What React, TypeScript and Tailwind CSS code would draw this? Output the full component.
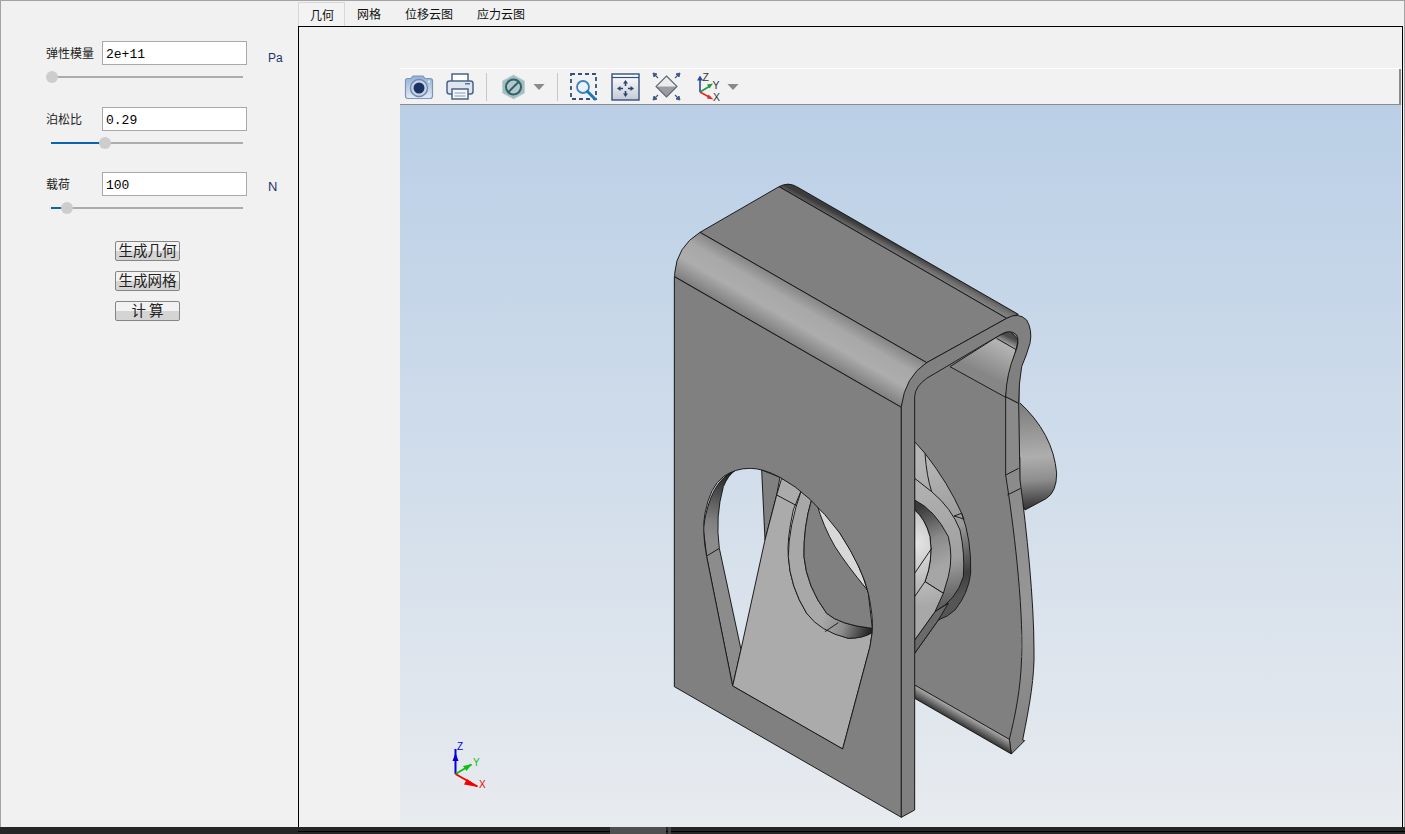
import React from 'react';

const cjk = { fontFamily: '"Noto Sans CJK SC", "Liberation Sans", sans-serif' };

const Z3 = 'translate(660 170) scale(0.33333)';
const Z4 = 'translate(660 450) scale(0.33333)';
const Z6 = 'translate(880 430) scale(0.33333)';
const EDGE = { stroke: '#1c1c1c', strokeWidth: 3, strokeLinejoin: 'round' as const };

const Field: React.FC<{ label: string; value: string; unit?: string; unitClass?: string }> = ({ label, value, unit, unitClass }) => (
  <div className="flex h-6 items-center">
    <span className="w-14 text-xs text-[#222]" style={cjk}>{label}</span>
    <input
      readOnly
      value={value}
      className="h-6 w-[145px] border border-[#a9a9a9] bg-white px-[3px] pt-0.5 font-['Liberation_Mono'] text-[13px] text-black outline-none"
    />
    {unit && <span className={unitClass}>{unit}</span>}
  </div>
);

const Slider: React.FC<{ fill: string; thumb: string }> = ({ fill, thumb }) => (
  <div className="relative ml-[5px] mt-2.5 flex h-1 w-[192px] items-center bg-transparent">
    <div className="h-0.5 w-full bg-[#acacac]" />
    <div className={`absolute left-0 top-[1px] h-0.5 bg-[#0a64b4] ${fill}`} />
    <div className={`absolute -top-[4px] h-3 w-3 rounded-full bg-[#cdcdcd] ${thumb}`} />
  </div>
);

const Btn: React.FC<{ children: React.ReactNode }> = ({ children }) => (
  <button
    className="flex h-5 w-[65px] items-center justify-center rounded-[2px] border border-[#858585] bg-linear-to-b from-[#f2f2f2] from-50% to-[#d4d4d4] to-50% pb-0.5 text-[14.5px] leading-none text-[#222]"
    style={cjk}
  >
    {children}
  </button>
);

const Tab: React.FC<{ children: React.ReactNode; active?: boolean }> = ({ children, active }) => (
  <div
    className={`flex h-6 items-center text-xs text-[#111] ${active ? 'w-[47px] border border-b-0 border-[#d8d8d8] bg-[#f3f3f3] pl-[11px]' : 'px-3'}`}
    style={cjk}
  >
    {children}
  </div>
);

const ToolbarIcons: React.FC = () => (
  <div className="flex h-[35px] items-center border-r-2 border-[#8c8c8c] pl-[4px]">
    {/* camera */}
    <svg width="30" height="26" viewBox="0 0 30 26">
      <defs>
        <linearGradient id="cam" x1="0" y1="0" x2="0" y2="1">
          <stop offset="0" stopColor="#8fb1d9" />
          <stop offset="1" stopColor="#e2ebf5" />
        </linearGradient>
      </defs>
      <path d="M1.5 6.5 Q1.5 4.5 4 4.5 H7 L9 2 H19 L21 4.5 H26 Q28.5 4.5 28.5 6.5 V22 Q28.5 24.5 26 24.5 H4 Q1.5 24.5 1.5 22 Z" fill="url(#cam)" stroke="#7f94b6" strokeWidth="1.2" />
      <circle cx="15" cy="14" r="8.5" fill="#c9d5e6" stroke="#7287ab" strokeWidth="1.4" />
      <circle cx="15" cy="14" r="5.5" fill="#1b3264" />
      <circle cx="25" cy="7.5" r="0.9" fill="#fff" />
    </svg>
    {/* printer */}
    <svg className="ml-3" width="28" height="27" viewBox="0 0 28 27">
      <rect x="6" y="1" width="16" height="9" fill="#fff" stroke="#4b6487" strokeWidth="1.5" />
      <rect x="1" y="8" width="26" height="13" rx="2.5" fill="#dfe6ef" stroke="#4b6487" strokeWidth="1.5" />
      <rect x="19" y="10" width="5" height="1.5" fill="#5d7394" />
      <rect x="6" y="16" width="16" height="10" fill="#f5f7fa" stroke="#4b6487" strokeWidth="1.5" />
      <path d="M8.5 20 H19.5 M8.5 23 H19.5" stroke="#8a9ab0" strokeWidth="1.2" />
    </svg>
    <div className="ml-3 h-7 w-px bg-[#c8c8c8]" />
    {/* nut */}
    <svg className="ml-3.5" width="25" height="26" viewBox="0 0 25 26">
      <path d="M12.5 1 L23.5 7 V19 L12.5 25 L1.5 19 V7 Z" fill="#a3bcc0" stroke="#c2d2d4" strokeWidth="1" />
      <circle cx="12.5" cy="13" r="7.5" fill="#b4c8cb" stroke="#2f6269" strokeWidth="2" />
      <path d="M7.5 18 L17.5 8" stroke="#2f6269" strokeWidth="2" />
    </svg>
    <svg className="ml-[7px]" width="12" height="6" viewBox="0 0 13 7"><path d="M0 0 H13 L6.5 7 Z" fill="#8a8a8a" /></svg>
    <div className="ml-[12px] h-7 w-px bg-[#c8c8c8]" />
    {/* zoom window */}
    <svg className="ml-3" width="28" height="28" viewBox="0 0 28 28">
      <rect x="1" y="1" width="25" height="25" fill="none" stroke="#34507c" strokeWidth="1.8" strokeDasharray="4 3" />
      <circle cx="13" cy="14" r="6" fill="#eaf1f8" stroke="#3a86bd" strokeWidth="1.8" />
      <path d="M17.5 18.5 L25 26" stroke="#1c78bb" strokeWidth="3" strokeLinecap="round" />
    </svg>
    {/* fit */}
    <svg className="ml-[13px]" width="29" height="28" viewBox="0 0 29 28">
      <defs>
        <linearGradient id="fit" x1="0" y1="0" x2="0" y2="1">
          <stop offset="0" stopColor="#ffffff" />
          <stop offset="1" stopColor="#c4cad6" />
        </linearGradient>
      </defs>
      <rect x="1" y="1" width="27" height="26" fill="url(#fit)" stroke="#34507c" strokeWidth="1.4" />
      <path d="M1 4.5 H28" stroke="#34507c" strokeWidth="1.2" />
      <path d="M14.5 10 V13 M14.5 18 V21 M9 15.5 H12 M17 15.5 H20" stroke="#2b456e" strokeWidth="1.6" />
      <path d="M14.5 7 L12 10.5 H17 Z M14.5 24 L12 20.5 H17 Z M6 15.5 L9.5 13 V18 Z M23 15.5 L19.5 13 V18 Z" fill="#2b456e" />
    </svg>
    {/* zoom to fit diamond */}
    <svg className="ml-[12px]" width="29" height="29" viewBox="0 0 29 29">
      <path d="M14.5 4 L25 14.5 H4 Z" fill="#ececec" />
      <path d="M4 14.5 H25 L14.5 25 Z" fill="#9a9ba3" />
      <path d="M14.5 4 L25 14.5 L14.5 25 L4 14.5 Z" fill="none" stroke="#5f6672" strokeWidth="1.1" />
      <path d="M1 1 L5 2 L2 5 Z M28 1 L24 2 L27 5 Z M1 28 L5 27 L2 24 Z M28 28 L24 27 L27 24 Z" fill="#3f5a82" stroke="#3f5a82" />
      <path d="M2 2 L6 6 M27 2 L23 6 M2 27 L6 23 M27 27 L23 23" stroke="#3f5a82" strokeWidth="1.2" />
    </svg>
    {/* axes */}
    <svg className="ml-[13px]" width="27" height="29" viewBox="0 0 27 29">
      <path d="M6 20 V7" stroke="#2747a8" strokeWidth="1.6" />
      <path d="M6 3.5 L3 8.5 H9 Z" fill="#2747a8" />
      <path d="M6 20 L16 14" stroke="#1f9a45" strokeWidth="1.6" />
      <path d="M19 11.5 L13 12.5 L15.5 16.5 Z" fill="#1f9a45" />
      <path d="M6 20 L16 25.5" stroke="#e02a2a" strokeWidth="1.6" />
      <path d="M19.5 27.5 L14.5 22.5 L13 26.5 Z" fill="#e02a2a" />
      <text x="8.5" y="8.5" fontSize="10.5" fontFamily="Liberation Sans" fill="#333">Z</text>
      <text x="18.5" y="17" fontSize="10.5" fontFamily="Liberation Sans" fill="#333">Y</text>
      <text x="19" y="28.5" fontSize="10.5" fontFamily="Liberation Sans" fill="#333">X</text>
    </svg>
    <svg className="ml-[6px]" width="12" height="6" viewBox="0 0 13 7"><path d="M0 0 H13 L6.5 7 Z" fill="#8a8a8a" /></svg>
  </div>
);

// the clip nut, traced in page coordinates; groups use the 3x crop coordinates
const Model: React.FC = () => (
  <svg className="block h-full w-full" viewBox="400 105 1001 722" shapeRendering="crispEdges">
    <defs>
      <linearGradient id="dome" gradientUnits="userSpaceOnUse" x1="1110" y1="700" x2="1130" y2="1020">
        <stop offset="0" stopColor="#7c7c7c" />
        <stop offset="0.5" stopColor="#aeaeae" />
        <stop offset="0.72" stopColor="#8e8e8e" />
        <stop offset="1" stopColor="#2f2f2f" />
      </linearGradient>
      <linearGradient id="under" gradientUnits="userSpaceOnUse" x1="905" y1="790" x2="885" y2="825">
        <stop offset="0" stopColor="#a2a2a2" />
        <stop offset="1" stopColor="#161616" />
      </linearGradient>
      <linearGradient id="innerBend" gradientUnits="userSpaceOnUse" x1="1045" y1="500" x2="985" y2="620">
        <stop offset="0" stopColor="#4c4c4c" />
        <stop offset="0.2" stopColor="#b4b4b4" />
        <stop offset="1" stopColor="#868686" />
      </linearGradient>
      <linearGradient id="strip" gradientUnits="userSpaceOnUse" x1="0" y1="900" x2="0" y2="1750">
        <stop offset="0" stopColor="#8a8a8a" />
        <stop offset="0.5" stopColor="#979797" />
        <stop offset="1" stopColor="#808080" />
      </linearGradient>
      <linearGradient id="cutOuter" gradientUnits="userSpaceOnUse" x1="150" y1="100" x2="265" y2="490">
        <stop offset="0" stopColor="#b4b4b4" />
        <stop offset="0.5" stopColor="#9a9a9a" />
        <stop offset="0.85" stopColor="#3e3e3e" />
        <stop offset="1" stopColor="#555555" />
      </linearGradient>
      <linearGradient id="cutBand" gradientUnits="userSpaceOnUse" x1="140" y1="170" x2="235" y2="510">
        <stop offset="0" stopColor="#b0b0b0" />
        <stop offset="0.65" stopColor="#a0a0a0" />
        <stop offset="1" stopColor="#606060" />
      </linearGradient>
      <linearGradient id="cutDark" gradientUnits="userSpaceOnUse" x1="125" y1="230" x2="205" y2="400">
        <stop offset="0" stopColor="#3a3a3a" />
        <stop offset="0.55" stopColor="#8a8a8a" />
        <stop offset="1" stopColor="#a6a6a6" />
      </linearGradient>
      <radialGradient id="cutLight" gradientUnits="userSpaceOnUse" cx="105" cy="340" r="190">
        <stop offset="0" stopColor="#e6e6e6" />
        <stop offset="0.6" stopColor="#bdbdbd" />
        <stop offset="1" stopColor="#a8a8a8" />
      </radialGradient>
      <linearGradient id="topRim" gradientUnits="userSpaceOnUse" x1="712" y1="226" x2="696" y2="256">
        <stop offset="0" stopColor="#3c3c3c" />
        <stop offset="0.55" stopColor="#6e6e6e" />
        <stop offset="1" stopColor="#828282" />
      </linearGradient>
      <linearGradient id="bend" gradientUnits="userSpaceOnUse" x1="460" y1="383" x2="384" y2="514">
        <stop offset="0" stopColor="#868686" />
        <stop offset="0.28" stopColor="#a8a8a8" />
        <stop offset="0.62" stopColor="#adadad" />
        <stop offset="1" stopColor="#808080" />
      </linearGradient>
      <linearGradient id="rimLeft" gradientUnits="userSpaceOnUse" x1="205" y1="70" x2="150" y2="265">
        <stop offset="0" stopColor="#222222" />
        <stop offset="0.35" stopColor="#505050" />
        <stop offset="0.75" stopColor="#808080" />
        <stop offset="1" stopColor="#8c8c8c" />
      </linearGradient>
      <linearGradient id="dent" gradientUnits="userSpaceOnUse" x1="490" y1="500" x2="630" y2="552">
        <stop offset="0" stopColor="#a8a8a8" />
        <stop offset="0.45" stopColor="#8c8c8c" />
        <stop offset="1" stopColor="#222222" />
      </linearGradient>
    </defs>

    {/* behind: dome, back plate */}
    <g transform={Z3} {...EDGE}>
      <path d="M1076,695 Q1180,790 1190,910 Q1190,965 1160,985 L1095,1020 L1040,900 Z" fill="url(#dome)" />
      <path d="M764,620 L1080,480 L1085,1700 L1048,1708 L764,1545 Z" fill="#808080" stroke="none" />
      <path d="M870,590 L1020,495 L1050,483 L1075,510 L1065,550 L1045,620 L1037,682 Z" fill="url(#innerBend)" />
      <path d="M1010,505 L1070,540" fill="none" />
      <path d="M1037,680 L1037,915 C1060,1060 1090,1300 1085,1460 C1082,1560 1065,1640 1048,1708 L1054,1752 L1094,1712 L1088,1710 C1110,1600 1124,1520 1122,1440 C1122,1290 1100,1080 1080,930 L1076,700 Z" fill="url(#strip)" />
      <path d="M1037,915 L1076,895 M1042,975 L1082,955" fill="none" />
    </g>
    <g transform={Z4} {...EDGE}>
      <path d="M764,705 L1048,868 L1054,912 L764,745 Z" fill="url(#under)" />
    </g>

    {/* cutout seen past the front plate */}
    <g transform={Z6} {...EDGE}>
      <path d="M104,35 L135,70 Q205,160 245,250 Q275,330 272,430 Q265,490 225,540 Q205,560 175,570 L104,670 Z" fill="url(#cutOuter)" />
      <path d="M135,70 Q140,140 155,185 M222,258 L245,250 L252,268 Q238,262 222,258" fill="none" />
      <path d="M104,145 L155,185 Q215,235 240,300 Q255,370 250,440 Q230,510 165,545 L104,630 Z" fill="url(#cutBand)" />
      <path d="M104,630 L165,545 L205,520 L175,570 L104,670 Z" fill="#6a6a6a" />
      <path d="M104,210 Q165,240 205,320 Q220,380 205,440 L190,490 L135,455 Q160,390 150,320 Q135,265 104,240 Z" fill="url(#cutDark)" />
      <path d="M104,240 Q135,265 150,320 Q160,390 135,455 L190,490 L165,545 L104,630 Z" fill="url(#cutLight)" />
      <path d="M104,430 L155,355 M104,500 L135,455" fill="none" />
    </g>

    {/* pieces seen through the big hole */}
    <g transform={Z4} {...EDGE}>
      <path d="M225,62 Q150,90 130,235 L140,320 L218,708 L243,598 L178,295 Q165,200 190,110 Q205,75 225,62 Z" fill="url(#rimLeft)" />
      <path d="M140,318 L178,295" fill="none" />
      <path d="M305,60 L360,82 L350,135 L315,270 Z" fill="#808080" />
      <path d="M218,708 L243,598 L315,270 L350,135 L365,85 L425,118 L400,180 Q380,270 385,320 Q390,410 440,490 Q480,540 565,565 Q610,565 637,545 L630,590 L548,897 Z" fill="#ababab" />
      <path d="M350,135 L410,167" fill="none" />
      <path d="M425,118 L455,148 Q430,230 432,320 Q440,410 500,490 Q540,525 637,535 L637,548 Q610,565 565,565 Q480,545 440,490 Q390,410 385,320 Q385,230 425,118 Z" fill="url(#dent)" />
      <path d="M495,545 L535,518" fill="none" />
      <path d="M455,148 Q430,230 432,320 Q440,410 500,490 Q540,525 637,535 L625,430 Q610,360 540,250 Q480,170 455,148 Z" fill="#808080" />
      <path d="M470,160 Q490,230 525,290 Q560,345 622,420 Q600,340 540,250 Q500,190 470,160 Z" fill="#d8d8d8" />
    </g>

    {/* front shell */}
    <g transform={Z3} {...EDGE}>
      <path d="M357,50 Q385,35 410,50 L1075,433 L1040,445 Z" fill="url(#topRim)" />
      <path d="M120,187 L357,50 L1040,445 L800,578 Z" fill="#808080" />
      <path d="M120,187 L800,578 Q740,620 724,712 L44,320 L44,310 Q50,230 120,187 Z" fill="url(#bend)" />
    </g>
    <g transform={Z4} {...EDGE}>
      <path
        fillRule="evenodd"
        fill="#808080"
        d="M43,-520 L724,-128 L724,1102 L43,710 Z M218,708 L140,320 Q125,240 135,190 Q150,110 190,80 Q225,55 270,55 Q310,55 360,82 Q450,130 540,250 Q610,360 625,430 Q640,500 637,545 L630,590 L548,897 Z"
      />
    </g>
    <g transform={Z3} {...EDGE}>
      <path
        fill="#808080"
        d="M724,1942 L724,710 Q735,620 800,578 L1040,445 Q1075,425 1100,450 Q1118,480 1110,520 Q1100,555 1085,590 Q1076,640 1076,700 L1037,680 Q1040,610 1065,550 Q1080,515 1070,495 Q1050,475 1020,495 L800,625 Q765,650 764,680 L764,1920 Z"
      />
    </g>

    {/* corner triad */}
    <g shapeRendering="auto">
      <path d="M455.5 774 V749" stroke="#0000e0" strokeWidth="2" />
      <path d="M455.5 753 L452.5 761 H458.5 Z" fill="#0000e0" />
      <path d="M455.5 774 L471.5 764.5" stroke="#10c010" strokeWidth="2" />
      <path d="M472 764 L463 766 L466.5 771 Z" fill="#10c010" />
      <path d="M455.5 774 L477.5 786.5" stroke="#f00000" strokeWidth="2" />
      <path d="M478 787 L467 779 L464 784.5 Z" fill="#f00000" />
      <text x="457" y="750" fontSize="10" fontFamily="Liberation Sans" fill="#0000e0">Z</text>
      <text x="473" y="766" fontSize="10" fontFamily="Liberation Sans" fill="#10c010">Y</text>
      <text x="479" y="788" fontSize="10" fontFamily="Liberation Sans" fill="#f00000">X</text>
    </g>
  </svg>
);

const App: React.FC = () => {
  return (
    <div className="flex h-[834px] w-[1405px] flex-col overflow-hidden bg-[#f1f1f1]">
      <div className="flex min-h-0 flex-1 border-x border-t border-[#a3a3a3]">
        {/* parameters */}
        <div className="w-[297px] shrink-0 pl-[45px] pt-10">
          <Field label="弹性模量" value="2e+11" unit="Pa" unitClass="ml-[21px] mt-[9px] font-['Liberation_Sans'] text-xs text-[#1c3566]" />
          <Slider fill="w-0" thumb="left-[-5px]" />
          <div className="mt-7">
            <Field label="泊松比" value="0.29" />
          </div>
          <Slider fill="w-[54px]" thumb="left-[48px]" />
          <div className="mt-[27px]">
            <Field label="载荷" value="100" unit="N" unitClass="ml-[21px] mt-[6px] font-['Liberation_Sans'] text-[13px] text-[#1c3566]" />
          </div>
          <Slider fill="w-4" thumb="left-[10px]" />
          <div className="ml-[69px] mt-[31px] flex flex-col gap-2.5">
            <Btn>生成几何</Btn>
            <Btn>生成网格</Btn>
            <Btn>计 算</Btn>
          </div>
        </div>

        {/* views */}
        <div className="flex min-w-0 flex-1 flex-col pr-[1px]">
          <div className="flex h-[25px] shrink-0 items-end">
            <Tab active>几何</Tab>
            <Tab>网格</Tab>
            <Tab>位移云图</Tab>
            <Tab>应力云图</Tab>
          </div>
          <div className="flex min-h-0 flex-1 flex-col border-x border-t border-black pl-[101px] pr-[1px] pt-[41px]">
            <div className="shrink-0 border-t border-white bg-[#f2f2f2] border-b border-b-[#8c8c8c]">
              <ToolbarIcons />
            </div>
            <div className="min-h-0 flex-1 bg-linear-to-b from-[#bacfe6] to-[#e8ebef]">
              <Model />
            </div>
          </div>
        </div>
      </div>

      {/* window strip under the app */}
      <div className="relative h-[7px] shrink-0 bg-[#262626]">
        <div className="absolute bottom-[2px] left-[298px] right-0 h-px bg-black" />
        <div className="absolute left-[610px] top-0 h-[7px] w-14 bg-[#505050]" />
        <div className="absolute left-[668px] top-0 h-[7px] w-[3px] bg-[#444]" />
      </div>
    </div>
  );
};

export default App;
